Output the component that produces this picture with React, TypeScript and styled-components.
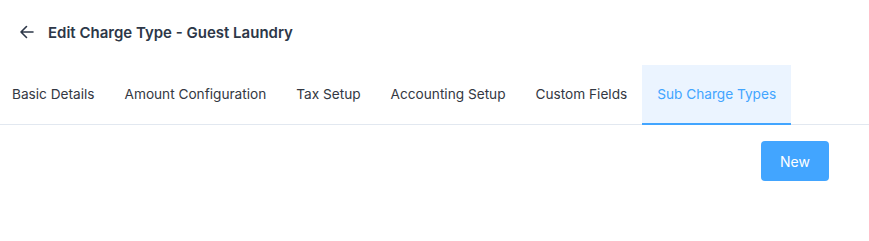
import { useState } from "react";
import styled, { createGlobalStyle } from "styled-components";

const GlobalStyle = createGlobalStyle`
  body {
    margin: 0;
    background: #ffffff;
    font-family: Inter, "Noto Sans", sans-serif;
  }
`;

const Page = styled.div`
  width: 869px;
  height: 241px;
  overflow: hidden;
`;

const Header = styled.div`
  display: flex;
  align-items: center;
  gap: 13px;
  height: 24px;
  padding: 20px 0 0 19px;
`;

const BackButton = styled.button`
  display: flex;
  align-items: center;
  justify-content: center;
  width: 16px;
  height: 16px;
  padding: 0;
  border: none;
  background: none;
  color: #2d3748;
  cursor: pointer;
`;

const Title = styled.h1`
  margin: 0;
  font-size: 15px;
  font-weight: 600;
  color: #2d3748;
`;

const TabList = styled.div`
  display: flex;
  margin: 21px 0 0 -3px;
  border-bottom: 1px solid #e2e8f0;
`;

const Tab = styled.button<{ $active?: boolean }>`
  height: 60px;
  padding: 0 15px;
  border: none;
  border-bottom: 2px solid ${(p) => (p.$active ? "#42a5ff" : "transparent")};
  background: ${(p) => (p.$active ? "#ebf4ff" : "transparent")};
  color: ${(p) => (p.$active ? "#42a5ff" : "#333842")};
  font-family: inherit;
  font-size: 13.65px;
  cursor: pointer;
  margin-bottom: -1px;
`;

const Toolbar = styled.div`
  display: flex;
  justify-content: flex-end;
  padding: 16px 40px 0 0;
`;

const PrimaryButton = styled.button`
  width: 68px;
  height: 40px;
  border: none;
  border-radius: 4px;
  background: #42a5ff;
  color: #ffffff;
  font-family: inherit;
  font-size: 14px;
  cursor: pointer;
`;

const tabs = [
  "Basic Details",
  "Amount Configuration",
  "Tax Setup",
  "Accounting Setup",
  "Custom Fields",
  "Sub Charge Types",
];

export default function App() {
  const [active, setActive] = useState("Sub Charge Types");

  return (
    <Page>
      <GlobalStyle />
      <Header>
        <BackButton aria-label="Back">
          <svg width="16" height="16" viewBox="0 0 16 16" fill="none" stroke="currentColor" strokeWidth="1.6" strokeLinecap="round" strokeLinejoin="round">
            <path d="M14 8H2M7.5 2.5 2 8l5.5 5.5" />
          </svg>
        </BackButton>
        <Title>Edit Charge Type - Guest Laundry</Title>
      </Header>
      <TabList>
        {tabs.map((t) => (
          <Tab key={t} $active={t === active} onClick={() => setActive(t)}>
            {t}
          </Tab>
        ))}
      </TabList>
      <Toolbar>
        <PrimaryButton>New</PrimaryButton>
      </Toolbar>
    </Page>
  );
}
